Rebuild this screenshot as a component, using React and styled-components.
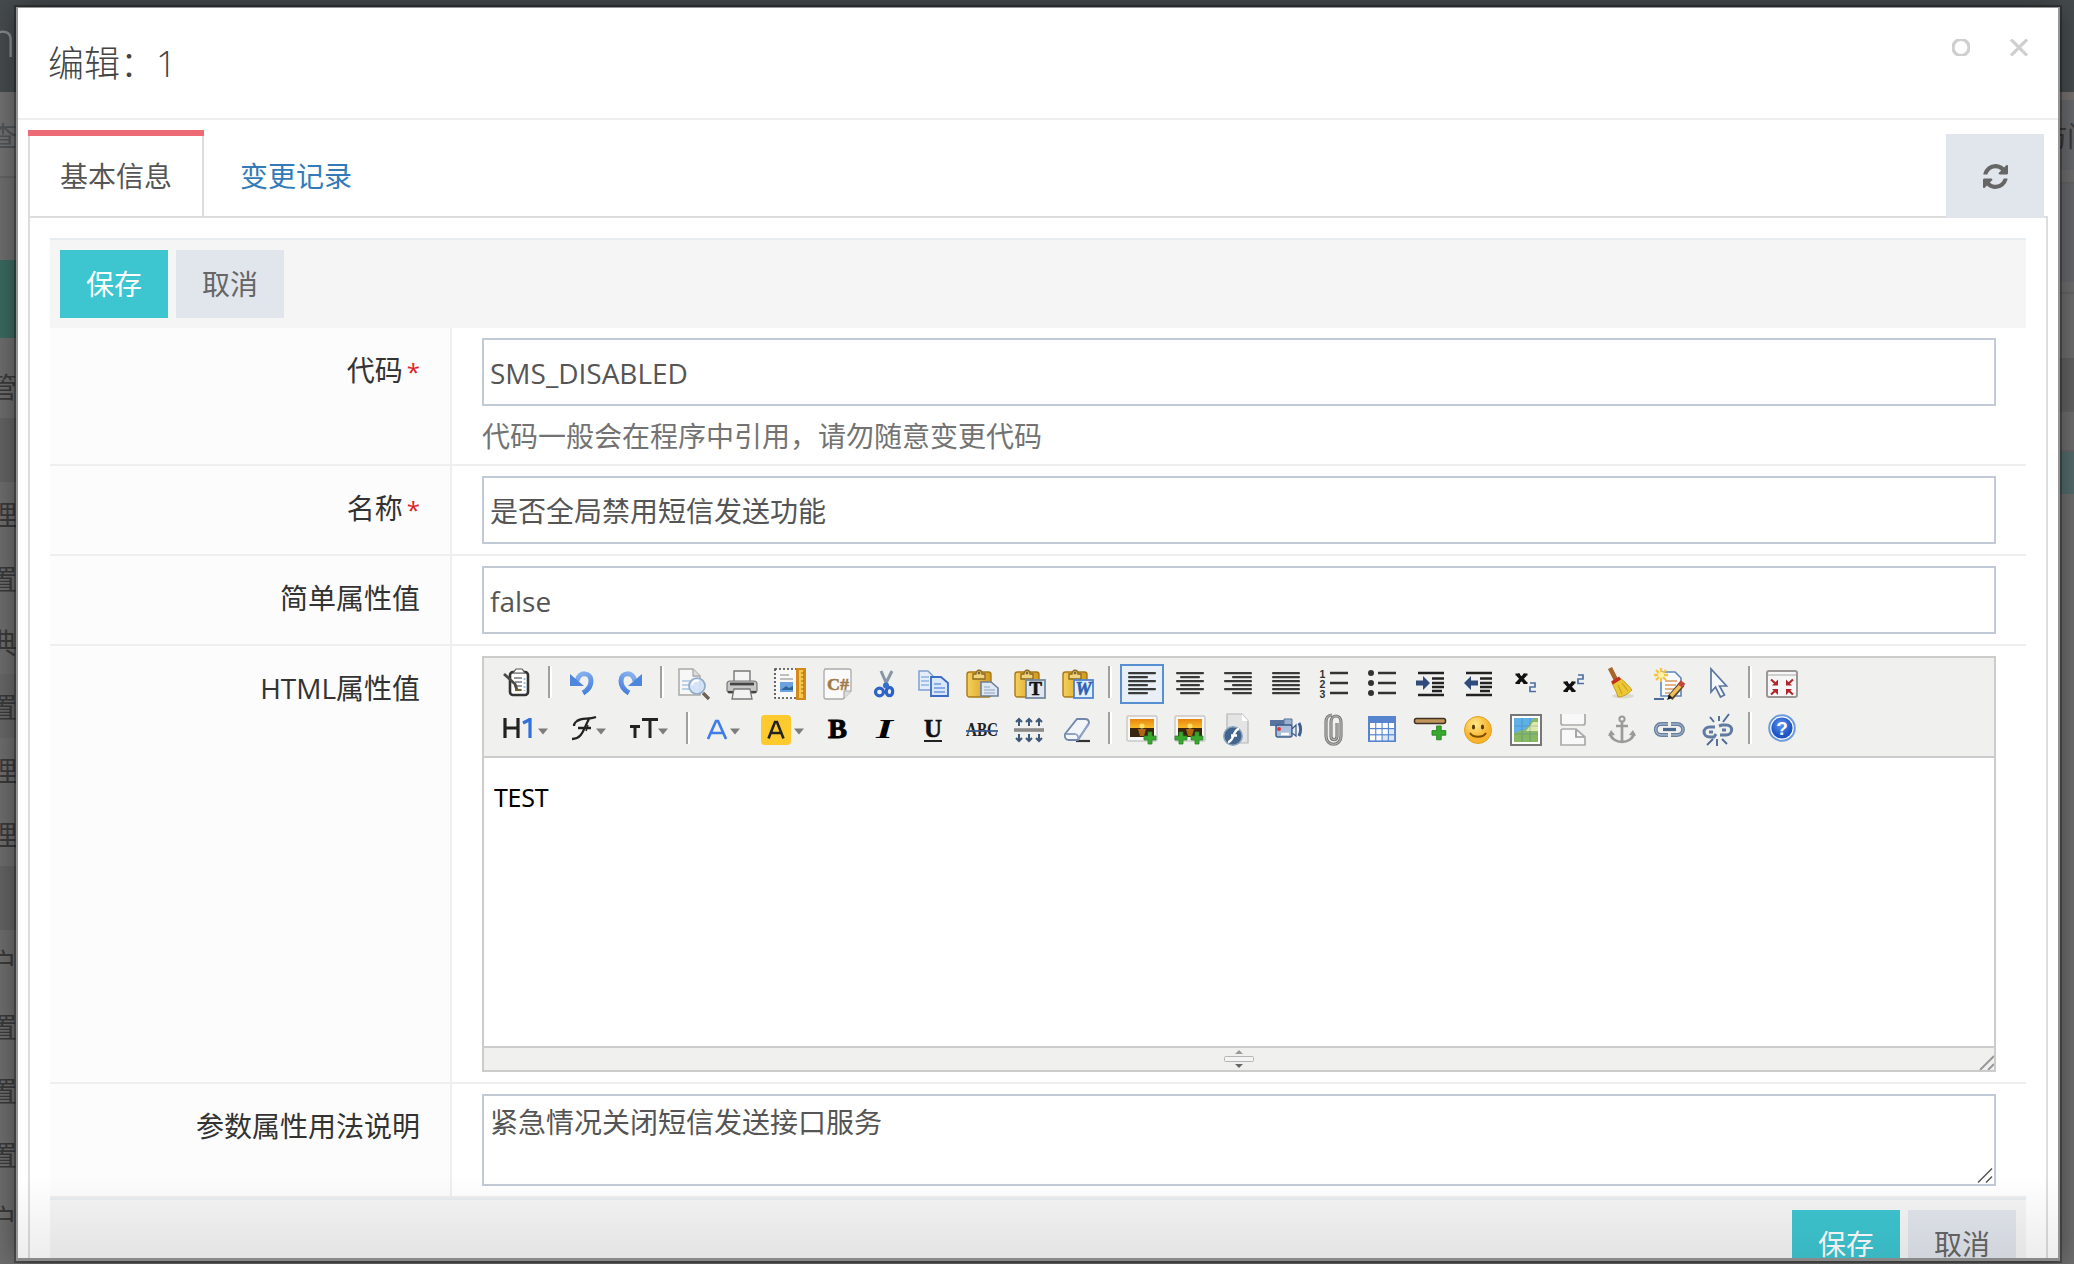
import React from 'react';
import styled, { createGlobalStyle, css } from 'styled-components';

const Global = createGlobalStyle`
  * { box-sizing: border-box; }
  body {
    margin: 0;
    overflow: hidden;
    font-family: "Open Sans", "Noto Sans CJK SC", sans-serif;
    font-size: 28px;
    color: #333;
  }
  button, input, textarea { font-family: inherit; font-size: inherit; margin: 0; }
`;

/* ---------- page behind the dialog ---------- */
const Page = styled.div`
  position: relative;
  width: 2074px;
  height: 1264px;
  overflow: hidden;
  background: #6d6d6d;
  display: flex;
  flex-direction: column;
`;
const TopBar = styled.div`
  height: 92px;
  flex: none;
  background: #464b4e;
  overflow: hidden;
`;
const Brand = styled.div`
  margin: 4px 0 0 -13px;
  font-size: 49px;
  font-weight: 300;
  line-height: 68px;
  color: #85898c;
`;
const Behind = styled.div`
  flex: 1;
  display: flex;
  justify-content: space-between;
`;
const Side = styled.div`
  width: 30px;
  overflow: hidden;
  display: flex;
  flex-direction: column;
`;
const SideItem = styled.div`
  flex: none;
  height: ${(p) => p.$h}px;
  line-height: ${(p) => p.$h + 2}px;
  background: ${(p) => p.$bg || 'transparent'};
  border-bottom: ${(p) => (p.$line ? '2px solid #646464' : '0')};
  color: ${(p) => p.$fg || '#3a3a3a'};
  text-indent: ${(p) => p.$indent ?? -11}px;
  white-space: nowrap;
`;

/* ---------- dialog ---------- */
const Dialog = styled.div`
  position: absolute;
  left: 16px;
  top: 7px;
  width: 2044px;
  height: 1254px;
  border: 2px solid #949494;
  border-top-width: 1px;
  border-bottom: 3px solid #8a8a8a;
  background: #fff;
  box-shadow: 0 0 0 2px rgba(0, 0, 0, 0.28), 0 0 26px rgba(0, 0, 0, 0.42);
  overflow: hidden;
`;
const Header = styled.div`
  height: 112px;
  border-bottom: 2px solid #eee;
  display: flex;
  justify-content: space-between;
  padding: 0 30px 0 30px;
`;
const Title = styled.div`
  font-size: 36px;
  font-weight: 300;
  line-height: 111px;
  white-space: pre;
  color: #444;
`;
const HeaderTools = styled.div`
  display: flex;
  gap: 40px;
  padding-top: 31px;
`;
const ToolIcon = styled.svg`
  display: block;
  width: 18px;
  height: 17px;
  fill: none;
  stroke: #cfcfcf;
  stroke-width: 3.2;
`;
const TabBar = styled.div`
  height: 98px;
  padding: 10px 14px 0 10px;
  display: flex;
`;
const Tab = styled.div`
  width: ${(p) => (p.$active ? 176 : 184)}px;
  height: 86px;
  border: solid ${(p) => (p.$active ? '#ddd' : 'transparent')};
  border-width: 0 2px;
  position: relative;
  display: flex;
  justify-content: center;
  line-height: 92px;
  color: ${(p) => (p.$active ? '#555' : '#337ab7')};
  ${(p) =>
    p.$active &&
    css`
      &::before {
        content: '';
        position: absolute;
        left: -2px;
        right: -2px;
        top: 0;
        height: 6px;
        background: #ed6b75;
      }
    `}
`;
const Refresh = styled.button`
  margin: 4px 0 0 auto;
  width: 98px;
  height: 84px;
  border: 0;
  padding: 0;
  background: #e1e5ec;
  color: #666;
  display: flex;
  align-items: center;
  justify-content: center;
  z-index: 1;
`;
const Pane = styled.div`
  margin: -2px 10px 0;
  height: 1100px;
  border: 2px solid #ddd;
  padding: 20px;
`;
const Actions = styled.div`
  height: 90px;
  border-top: 2px solid #e7ecf1;
  background: #f5f5f5;
  padding: 10px;
  display: flex;
  gap: 8px;
  justify-content: ${(p) => (p.$end ? 'flex-end' : 'flex-start')};
`;
const Button = styled.button`
  width: 108px;
  height: 68px;
  border: 0;
  padding: 0;
  line-height: 68px;
  background: ${(p) => (p.$primary ? '#3dc5d0' : '#e1e5ec')};
  color: ${(p) => (p.$primary ? '#fff' : '#666')};
`;
const Row = styled.div`
  height: ${(p) => p.$h}px;
  border-bottom: 2px solid #efefef;
  display: flex;
`;
const Label = styled.label`
  width: 400px;
  flex: none;
  background: #fcfcfc;
  padding: 19px 30px 0 0;
  text-align: right;
  line-height: 46px;
`;
const Star = styled.span`
  margin-left: 4px;
  font-size: 24px;
  line-height: 1;
  color: #e02222;
`;
const Field = styled.div`
  flex: 1;
  border-left: 2px solid #efefef;
  padding: 10px 30px;
`;
const Input = styled.input`
  display: block;
  width: 1514px;
  height: 68px;
  border: 2px solid #c2cad8;
  padding: ${(p) => (p.$cjk ? '0 6px 1px' : '2px 6px 0')};
  color: #555;
  outline: 0;
`;
const Help = styled.div`
  height: 46px;
  line-height: 46px;
  margin-top: 7px;
  color: #737373;
`;
const TextArea = styled.textarea`
  display: block;
  width: 1514px;
  height: 92px;
  border: 2px solid #c2cad8;
  padding: 6px 6px;
  line-height: 40px;
  color: #555;
  resize: none;
  outline: 0;
`;
const AreaWrap = styled.div`
  position: relative;
  width: 1514px;
`;
const AreaGrip = styled.svg`
  position: absolute;
  right: 3px;
  bottom: 3px;
  width: 16px;
  height: 16px;
`;
const Bottom = styled.div`
  position: absolute;
  left: 0;
  right: 0;
  bottom: 0;
  height: 84px;
  background: linear-gradient(rgba(0, 0, 0, 0), rgba(0, 0, 0, 0.07));
  pointer-events: none;
`;

/* ---------- rich text editor ---------- */
const Editor = styled.div`
  width: 1514px;
  height: 416px;
  border: 2px solid #ccc;
  display: flex;
  flex-direction: column;
`;
const Toolbar = styled.div`
  height: 100px;
  border-bottom: 2px solid #ccc;
  background: #f0f0ee;
  padding: 6px 0 0 12px;
  display: flex;
  flex-direction: column;
  gap: 2px;
`;
const ToolRow = styled.div`
  height: 44px;
  display: flex;
  align-items: flex-start;
`;
const Tool = styled.div`
  width: ${(p) => p.$w - 4}px;
  height: 40px;
  margin-right: 4px;
  padding: 2px 4px;
  border: 2px solid ${(p) => (p.$on ? '#5690d2' : 'transparent')};
  background: ${(p) => (p.$on ? '#e9eff6' : 'transparent')};
  display: flex;
`;
const Glyph = styled.svg`
  display: block;
  flex: none;
  height: 32px;
  overflow: visible;
`;
const Divider = styled.div`
  width: 4px;
  height: 32px;
  margin: 2px 8px 0 4px;
  border-left: 2px solid #a0a0a0;
  border-right: 2px solid #fff;
`;
const Canvas = styled.div`
  flex: 1;
  background: #fff;
  padding: 21px 10px;
  font-family: "Noto Sans", sans-serif;
  font-size: 25px;
  letter-spacing: -0.3px;
  line-height: 36px;
  color: #000;
`;
const Status = styled.div`
  height: 24px;
  border-top: 2px solid #ccc;
  background: #f0f0ee;
  display: grid;
  grid-template-columns: 16px 1fr 16px;
  justify-items: center;
`;
const Gradients = styled.svg`
  position: absolute;
  width: 0;
  height: 0;
`;

const bars = (ws, anchor) =>
  ws.map((w, i) => {
    const x = anchor === 'c' ? 16 - w / 2 : anchor === 'r' ? 30 - w : 2;
    return <rect key={i} x={x} y={4 + i * 4} width={w} height="2.3" rx="1" fill="#3a3a3a" />;
  });
const Clip = ({ children }) => (
  <>
    <rect x="1" y="4" width="24" height="25" rx="2.5" fill="url(#gold)" stroke="#a87916" strokeWidth="1.4" />
    <path d="M7 11V6h3c0-5 6-5 6 0h3v5z" fill="#f1d37c" stroke="#8a6a20" strokeWidth="1.3" />
    <circle cx="13" cy="5" r="1.4" fill="#7c6330" />
    {children}
  </>
);
const Plus = ({ x, y }) => (
  <path transform={`translate(${x} ${y})`} d="M4 0h4v4h4v4h-4v4h-4v-4h-4v-4h4z" fill="#39a82f" stroke="#2c8425" strokeWidth=".8" />
);
const Caret = ({ x }) => <path d={`M${x} 14.500h10l-5 6z`} fill="#7d7d7d" />;
const Photo = () => (
  <>
    <rect x="1" y="2" width="30" height="25" rx="1.5" fill="#f8f8f8" stroke="#c9c9c9" strokeWidth="1.5" />
    <rect x="4" y="5" width="24" height="10" fill="url(#sunset)" />
    <rect x="4" y="14" width="24" height="9" fill="#38240f" />
    <path d="M12 15h8l-2 7h-4z" fill="#b06712" />
    <circle cx="16" cy="12" r="2.5" fill="#ffe46b" />
  </>
);

const art = {
  source: (
    <>
      <rect x="8" y="4" width="18" height="23" rx="3" fill="#fff" stroke="#333" strokeWidth="2.6" />
      <path d="M11 5l3-4h6l3 4z" fill="#fff" stroke="#555" strokeWidth="1.2" />
      <path d="M12 10h8M13 14h7M12 18h8M13 22h7" stroke="#777" strokeWidth="1.4" />
      <path d="M22.500 10v13" stroke="#9bc7e6" strokeWidth="2" strokeDasharray="2 2" />
      <path d="M2 6l11 10 2 6" fill="none" stroke="#4b4a43" strokeWidth="2.8" />
      <path d="M13 22h6" stroke="#6f6639" strokeWidth="2.2" />
    </>
  ),
  undo: (
    <>
      <path d="M11 13C13 3 25 4 25 13c0 6-3 9-8 12" fill="none" stroke="url(#blue)" strokeWidth="5" />
      <path d="M4 6v12h14z" fill="#4f86dd" />
    </>
  ),
  redo: (
    <g transform="translate(32 0) scale(-1 1)">
      <path d="M11 13C13 3 25 4 25 13c0 6-3 9-8 12" fill="none" stroke="url(#blue)" strokeWidth="5" />
      <path d="M4 6v12h14z" fill="#4f86dd" />
    </g>
  ),
  preview: (
    <>
      <path d="M1 1h14l7 7v19H1z" fill="#f7f7f7" stroke="#a9a9a9" strokeWidth="1.5" />
      <path d="M15 1v7h7" fill="#ddd" stroke="#a9a9a9" strokeWidth="1.3" />
      <path d="M4 13h9M4 17h8M4 21h9" stroke="#a9c5e0" strokeWidth="1.6" />
      <path d="M25 25l6 6" stroke="#6c6258" strokeWidth="3.4" />
      <circle cx="19" cy="18" r="8" fill="#cfe2f7" fillOpacity=".92" stroke="#8fa9c8" strokeWidth="1.7" />
      <path d="M14 17c1-4 4-5 7-4" fill="none" stroke="#fff" strokeWidth="2" />
    </>
  ),
  print: (
    <>
      <path d="M8 14V3h16v11z" fill="#f4f4f4" stroke="#777" strokeWidth="1.4" />
      <rect x="1" y="13" width="30" height="12" rx="3" fill="#c7c7c7" stroke="#777" strokeWidth="1.2" />
      <path d="M4 16h24" stroke="#444" strokeWidth="2.8" />
      <path d="M2 24h28" stroke="#444" strokeWidth="2.2" />
      <path d="M8 21h16l2 10H6z" fill="#f2f2f2" stroke="#777" strokeWidth="1.3" />
    </>
  ),
  template: (
    <>
      <rect x="1" y="1" width="24" height="29" fill="#f8f8f8" stroke="#444" strokeWidth="1.6" strokeDasharray="2 2" />
      <path d="M6 7h9M6 11h13M15 15h4" stroke="#aaa" strokeWidth="1.4" />
      <rect x="6" y="14" width="13" height="10" fill="#6ba3e0" />
      <path d="M7 22l5-4 3 2 4-2v4z" fill="#2f6699" />
      <rect x="22" y="0" width="10" height="32" fill="#d4891b" />
      <rect x="25" y="2" width="4" height="28" fill="#f5c84c" />
      <path d="M27 5h3M27 9h3M27 13h3M27 17h3M27 21h3M27 25h3" stroke="#a8650c" strokeWidth="1" />
    </>
  ),
  code: (
    <>
      <path d="M3 1h24q2 0 2 2v20l-8 8H4q-2 0-2-2V3z" fill="#fafafa" stroke="#aaa" strokeWidth="1.3" />
      <path d="M29 23h-7v8" fill="#ddd" stroke="#aaa" strokeWidth="1.2" />
      <text x="5" y="21.5" fontFamily="Liberation Serif" fontWeight="bold" fontSize="16" textLength="22" lengthAdjust="spacingAndGlyphs" fill="#a07a48" stroke="#a07a48" strokeWidth=".5">C#</text>
    </>
  ),
  cut: (
    <>
      <path d="M11 3l7 16M22 3l-8 16" stroke="#8796a6" strokeWidth="3" />
      <ellipse cx="9.500" cy="24" rx="4" ry="3.8" fill="none" stroke="#2d62c8" strokeWidth="3.2" />
      <ellipse cx="19.5" cy="23.5" rx="3.2" ry="4.2" fill="none" stroke="#2d62c8" strokeWidth="3.2" />
      <circle cx="16" cy="17.5" r="3" fill="#3570cc" />
    </>
  ),
  copy: (
    <>
      <path d="M1 3h9l5 5v14H1z" fill="#e4eefb" stroke="#7fa0cf" strokeWidth="1.5" />
      <path d="M3 9h8M3 13h8M3 17h8" stroke="#8fb2e2" strokeWidth="1.4" />
      <path d="M13 9h10l7 6v13H13z" fill="#d8e7fb" stroke="#3c6cc4" strokeWidth="1.8" />
      <path d="M16 16h7M16 20h11M16 24h11" stroke="#6f98dc" strokeWidth="1.5" />
    </>
  ),
  paste: (
    <Clip>
      <path d="M15 14h10l7 6v8H15z" fill="#dfe7f2" stroke="#6b7f99" strokeWidth="1.6" />
      <path d="M18 19h6M18 22h11M18 25h11" stroke="#8ea3c0" strokeWidth="1.2" />
    </Clip>
  ),
  plain: (
    <Clip>
      <rect x="12" y="12" width="19" height="18" fill="#dfe6ee" stroke="#75899f" strokeWidth="1.8" />
      <text x="21.5" y="27" textAnchor="middle" fontFamily="Liberation Serif" fontWeight="bold" fontSize="19" fill="#111" stroke="#111" strokeWidth=".6">T</text>
    </Clip>
  ),
  word: (
    <Clip>
      <rect x="12" y="12" width="19" height="18" fill="#e6f0fc" stroke="#4e86cf" strokeWidth="1.8" />
      <text x="21.5" y="27" textAnchor="middle" fontFamily="Liberation Serif" fontWeight="bold" fontStyle="italic" fontSize="18" fill="#2b62b5" stroke="#2b62b5" strokeWidth=".6">W</text>
    </Clip>
  ),
  left: bars([28, 20, 28, 20, 28, 20]),
  center: bars([28, 20, 28, 20, 28, 20], 'c'),
  right: bars([28, 20, 28, 20, 28, 20], 'r'),
  full: bars([28, 28, 28, 28, 28, 28]),
  ol: (
    <>
      <path d="M12 5h18M12 15h18M12 25h18" stroke="#333" strokeWidth="2.4" />
      {[1, 2, 3].map((n) => (
        <text key={n} x="1.5" y={n * 10 - 0.5} fontFamily="Liberation Sans" fontWeight="bold" fontSize="10.5" fill="#333">{n}</text>
      ))}
    </>
  ),
  ul: (
    <>
      <path d="M12 5h18M12 15h18M12 25h18" stroke="#333" strokeWidth="2.4" />
      {[5, 15, 25].map((y) => <circle key={y} cx="5" cy={y} r="3" fill="#333" />)}
    </>
  ),
  indent: (
    <>
      <path d="M4 5h26M4 27h26" stroke="#222" strokeWidth="2.4" />
      <path d="M18 10.5h12M18 15h12M18 19h12M18 23h10" stroke="#222" strokeWidth="2.6" />
      <path d="M2 12.500h7V8l7 7-7 7v-4.500H2z" fill="#2f4a7b" />
    </>
  ),
  outdent: (
    <>
      <path d="M4 5h26M4 27h26" stroke="#222" strokeWidth="2.4" />
      <path d="M18 10.5h12M18 15h12M18 19h12M18 23h10" stroke="#222" strokeWidth="2.6" />
      <path d="M16 12.500H9V8l-7 7 7 7v-4.500h7z" fill="#2f4a7b" />
    </>
  ),
  sub: (
    <>
      <path d="M7.500 6.500l8 8.500M15.500 6.500l-8 8.500" stroke="#111" strokeWidth="3.4" />
      <path d="M5.500 6.500h4.500M13.500 6.500h4M5.500 15h4.500M13.500 15h4" stroke="#111" strokeWidth="2" />
      <path d="M20 15h5v4h-5v4.500h6" fill="none" stroke="#4f6fa3" strokeWidth="1.7" />
    </>
  ),
  sup: (
    <>
      <path d="M7.500 14.500l8 8.500M15.500 14.500l-8 8.500" stroke="#111" strokeWidth="3.4" />
      <path d="M5.500 14.500h4.500M13.500 14.500h4M5.500 23h4.500M13.500 23h4" stroke="#111" strokeWidth="2" />
      <path d="M20 7h5v4h-5v4.500h6" fill="none" stroke="#4f6fa3" strokeWidth="1.7" />
    </>
  ),
  clear: (
    <>
      <ellipse cx="17" cy="28" rx="11" ry="2.5" fill="#ddd9ce" />
      <path d="M4 0l6 12" stroke="#a5672b" strokeWidth="4.6" />
      <path d="M6 15l8-5c5 4 8 7 12 12-4 4-9 7-14 7-1-5-4-9-6-14z" fill="#ecc934" stroke="#c79c20" strokeWidth="1" />
      <path d="M6 15l8-5" stroke="#c22d20" strokeWidth="3.6" />
      <path d="M12 17l4 9M16 15l6 8" stroke="#c9a31f" strokeWidth="1.2" />
    </>
  ),
  format: (
    <>
      <path d="M7 4h14l6 6v18H7z" fill="#f8fbff" stroke="#5f86b8" strokeWidth="1.6" />
      <path d="M11 13h12M11 17h11M11 21h9M11 25h5" stroke="#dd9a63" strokeWidth="1.5" />
      <path d="M7 0v14M0 7h14M2 2l10 10M12 2L2 12" stroke="#f4c544" strokeWidth="2.3" />
      <circle cx="7" cy="7" r="3" fill="#fff3a8" />
      <path d="M0 31h10" stroke="#3e5c8c" strokeWidth="1.8" />
      <path d="M16 30L28 16" stroke="#5a4630" strokeWidth="6.5" />
      <path d="M17 28L27 17" stroke="#efc057" strokeWidth="3.6" />
      <path d="M26 18l3-4" stroke="#c0473c" strokeWidth="6" />
      <path d="M13 32l2-5 3 3z" fill="#111" />
    </>
  ),
  select: <path d="M9 1v23l4.500-5 5 10 4-2-5-9h7z" fill="#f5f8fc" stroke="#5b779f" strokeWidth="1.7" />,
  screen: (
    <>
      <rect x="1" y="3" width="30" height="26" rx="2" fill="#f6f6f6" stroke="#9c9696" strokeWidth="2" />
      <path d="M2 7h28" stroke="#cfcfcf" strokeWidth="2" />
      <path d="M12 17.500v-6l-6 6zM20 17.500v-6l6 6zM12 21v6l-6-6zM20 21v6l6-6z" fill="#b5262c" />
      <path d="M5 11.500l5 4.500M27 11.500l-5 4.500M5 26.500l5-4.500M27 26.500l-5-4.500" stroke="#b5262c" strokeWidth="2.2" />
    </>
  ),
  heading: (
    <>
      <path d="M3 4v20M16 4v20M3 14h13" fill="none" stroke="#222" strokeWidth="3.2" />
      <path d="M21 9l6-3M28 4v20" fill="none" stroke="#2f6fe0" strokeWidth="3.2" />
      <Caret x={36} />
    </>
  ),
  font: (
    <>
      <path d="M9 7C14 3 20 6 28 3M21 5c-5 8-6 20-17 20M10 14h13M12 6c-4 1-6 3-6 6" fill="none" stroke="#222" strokeWidth="2.3" />
      <path d="M20 11l-2 6" stroke="#222" strokeWidth="1.5" />
      <Caret x={28} />
    </>
  ),
  size: (
    <>
      <path d="M2 12.500h10M7 12v12M14 5.500h16M22 5v19" stroke="#222" strokeWidth="3" />
      <Caret x={30} />
    </>
  ),
  color: (
    <>
      <path d="M4 25L12 7h2l8 18M7 19h12" fill="none" stroke="#3f7de8" strokeWidth="2.7" />
      <Caret x={26} />
    </>
  ),
  hilite: (
    <>
      <rect x="3" y="1" width="30" height="30" rx="4" fill="#fdca2e" />
      <path d="M10.500 24.500L17 8h2l6.500 16.500M13 19h10" fill="none" stroke="#222" strokeWidth="2.6" />
      <Caret x={36} />
    </>
  ),
  bold: <text x="6" y="24" fontFamily="Liberation Serif" fontWeight="bold" fontSize="27" textLength="19" lengthAdjust="spacingAndGlyphs" fill="#000" stroke="#000" strokeWidth=".9">B</text>,
  italic: <text x="6" y="24" fontFamily="Liberation Serif" fontWeight="bold" fontStyle="italic" fontSize="27" textLength="17" lengthAdjust="spacingAndGlyphs" fill="#000">I</text>,
  underline: (
    <>
      <text x="6" y="23" fontFamily="Liberation Serif" fontWeight="bold" fontSize="25" textLength="18" lengthAdjust="spacingAndGlyphs" fill="#111" stroke="#111" strokeWidth=".6">U</text>
      <path d="M6 27h18" stroke="#222" strokeWidth="2" />
    </>
  ),
  strike: (
    <>
      <text x="0" y="22" fontFamily="Liberation Serif" fontWeight="bold" fontSize="19" textLength="32" lengthAdjust="spacingAndGlyphs" fill="#222">ABC</text>
      <path d="M0 17h32" stroke="#3c5c8f" strokeWidth="1.8" />
    </>
  ),
  lines: (
    <>
      <path d="M0 16h30" stroke="#8a8a8a" strokeWidth="3.6" />
      {[5, 15, 25].map((x) => (
        <path key={x} d={`M${x} 12V5M${x - 3} 8l3-3 3 3M${x} 20v7M${x - 3} 24l3 3 3-3`} fill="none" stroke="#3d5878" strokeWidth="2" />
      ))}
    </>
  ),
  eraser: (
    <>
      <path d="M14 27h14" stroke="#333" strokeWidth="2.2" />
      <path d="M3 20L15 5h8q4 0 4 4L16 26H6q-4-1-3-6z" fill="#f2f6fc" stroke="#7286ab" strokeWidth="1.8" />
      <path d="M4 20h9q4 1 3 5L27 10" fill="none" stroke="#8fa4c8" strokeWidth="1.8" />
    </>
  ),
  image: <><Photo /><Plus x={18} y={18} /></>,
  images: <><Photo /><Plus x={1} y={18} /><Plus x={17} y={18} /></>,
  flash: (
    <>
      <path d="M5 0h15l6 7v22H5z" fill="#e4e4e4" stroke="#b5b5b5" strokeWidth="1.2" />
      <path d="M20 0v7h6" fill="#fff" />
      <circle cx="11" cy="22" r="9.2" fill="#41658c" stroke="#8ba4bd" strokeWidth="1.5" />
      <path d="M17 15c-6 0-5 13-11 13M9 21.500h6" fill="none" stroke="#fff" strokeWidth="2.4" />
    </>
  ),
  media: (
    <>
      <path d="M0 6h14v6H0z" fill="#56749d" />
      <path d="M14 5h8v6h-8z" fill="#9bb1cc" stroke="#56749d" />
      <rect x="6" y="11" width="16" height="12" rx="2" fill="#a9bfdb" stroke="#3f5f8c" strokeWidth="1.5" />
      <path d="M22 15l4-4v11l-4-3z" fill="#dfe8f3" stroke="#3f5f8c" strokeWidth="1.2" />
      <path d="M29 9c2 4 2 9 0 13" fill="none" stroke="#3f5f8c" strokeWidth="3" />
      <circle cx="9" cy="15" r="2" fill="#d33" />
      <path d="M11 20h8" stroke="#fff" strokeWidth="2.5" />
    </>
  ),
  file: (
    <g fill="none">
      <path d="M19 9v13c0 5-6 5-6 0V8c0-8 10-8 10 0v14c0 11-15 11-15 0V8C8 4 10 1 14 1" stroke="#7c7c7c" strokeWidth="3.2" />
      <path d="M19 9v13c0 5-6 5-6 0V8c0-8 10-8 10 0v14c0 11-15 11-15 0V8C8 4 10 1 14 1" stroke="#bdbdbd" strokeWidth="1" />
    </g>
  ),
  table: (
    <>
      <rect x="2" y="2" width="28" height="26" fill="#5684cd" />
      {[0, 1, 2, 3].map((c) => [0, 1, 2].map((r) => (
        <rect key={`${c}${r}`} x={4 + c * 6.3} y={9 + r * 6.2} width="5.2" height="5" fill={c + r > 3 ? '#dbe7f8' : '#fff'} />
      )))}
    </>
  ),
  hr: (
    <>
      <rect x="0.5" y="4.5" width="31" height="5" rx="2" fill="#c0965b" stroke="#403225" strokeWidth="1.5" />
      <g transform="translate(18 12) scale(1.15)"><Plus x={0} y={0} /></g>
    </>
  ),
  smile: (
    <>
      <circle cx="16" cy="16" r="13.5" fill="url(#face)" stroke="#e0a021" strokeWidth="1" />
      <ellipse cx="11.5" cy="13" rx="1.6" ry="2.6" fill="#5a3a08" />
      <ellipse cx="20.5" cy="13" rx="1.6" ry="2.6" fill="#5a3a08" />
      <path d="M8 19c3 5 13 5 16 0" fill="none" stroke="#7a4c08" strokeWidth="2" />
    </>
  ),
  map: (
    <>
      <rect x="1" y="1" width="30" height="30" fill="#fff" stroke="#777" strokeWidth="2" />
      <rect x="4" y="4" width="24" height="24" fill="#87b863" />
      <path d="M4 4h20l-8 11-12 4z" fill="#5fb0e6" />
      <path d="M16 17l7-9h5v9z" fill="#dfe8a8" />
      <path d="M12 4v24M20 4v24M4 12h24M4 20h24" stroke="#3d6e9e" strokeOpacity=".3" strokeWidth="1.2" />
    </>
  ),
  pagebreak: (
    <>
      <path d="M3 0v9q0 2 2 2h20q2 0 2-2V0" fill="#f8f8f8" stroke="#aaa" strokeWidth="1.7" />
      <path d="M3 31V17q0-2 2-2h13l9 8v8z" fill="#f8f8f8" stroke="#aaa" strokeWidth="1.7" />
      <path d="M18 16v7h8" fill="none" stroke="#999" strokeWidth="1.7" />
    </>
  ),
  anchor: (
    <>
      <circle cx="16" cy="5" r="2.6" fill="none" stroke="#9a9a9a" strokeWidth="2" />
      <path d="M16 8v19M10 12h12M4 19c2 12 22 12 24 0" fill="none" stroke="#9a9a9a" strokeWidth="2.7" />
      <path d="M2 22l3-6 4 5zM30 22l-3-6-4 5z" fill="#9a9a9a" />
    </>
  ),
  link: (
    <>
      <path d="M14 10H7c-7 0-7 11 0 11h7M17 10h6c8 0 8 11 0 11h-6" fill="none" stroke="#69809f" strokeWidth="3.8" />
      <path d="M14 10H7c-7 0-7 11 0 11h7M17 10h6c8 0 8 11 0 11h-6" fill="none" stroke="#b7c8dd" strokeWidth="1" />
      <path d="M9 15.500h13" stroke="#4c6a8e" strokeWidth="3.2" />
    </>
  ),
  unlink: (
    <>
      <g fill="none" stroke="#5f7ba2" strokeWidth="3">
        <path d="M13 13H8c-8 0-8 10 0 10h4l2-3M7 18h4" />
        <path d="M17 12l3-1h4c8 0 7 10 0 10h-6M20 16h4" />
      </g>
      <path d="M17 7V2M21 8l6-8M12 8L8 3M15 25v7M11 25l-6 6M20 25l5 5" stroke="#4f6c95" strokeWidth="1.9" />
    </>
  ),
  help: (
    <>
      <circle cx="16" cy="14" r="12.8" fill="#fff" stroke="#6d9bdd" strokeWidth="2" />
      <circle cx="16" cy="14" r="10.6" fill="url(#orb)" />
      <text x="16" y="21" textAnchor="middle" fontFamily="Liberation Sans" fontWeight="bold" fontSize="19" fill="#fff">?</text>
    </>
  ),
};

const rowOne = ['source', '|', 'undo', 'redo', '|', 'preview', 'print', 'template', 'code', 'cut', 'copy', 'paste', 'plain', 'word', '|', 'left', 'center', 'right', 'full', 'ol', 'ul', 'indent', 'outdent', 'sub', 'sup', 'clear', 'format', 'select', '|', 'screen'];
const rowTwo = ['heading', 'font', 'size', '|', 'color', 'hilite', 'bold', 'italic', 'underline', 'strike', 'lines', 'eraser', '|', 'image', 'images', 'flash', 'media', 'file', 'table', 'hr', 'smile', 'map', 'pagebreak', 'anchor', 'link', 'unlink', '|', 'help'];
const wide = { heading: 66, font: 60, size: 60, color: 54, hilite: 64 };

const Tools = ({ names }) => (
  <ToolRow>
    {names.map((n, i) => {
      if (n === '|') return <Divider key={i} />;
      const w = wide[n] || 48;
      return (
        <Tool key={i} $w={w} $on={n === 'left'}>
          <Glyph width={w - 16} viewBox={`0 0 ${w - 16} 32`}>{art[n]}</Glyph>
        </Tool>
      );
    })}
  </ToolRow>
);

const Defs = () => (
  <Gradients>
    <defs>
      <linearGradient id="gold"><stop offset="0" stopColor="#f6d05a" /><stop offset="1" stopColor="#cf9a20" /></linearGradient>
      <linearGradient id="blue" gradientUnits="userSpaceOnUse" x1="10" y1="4" x2="22" y2="28"><stop offset="0" stopColor="#8fb8f4" /><stop offset="1" stopColor="#3f78d8" /></linearGradient>
      <linearGradient id="sunset" x2="0" y2="1"><stop offset="0" stopColor="#e8860f" /><stop offset="1" stopColor="#fbc02f" /></linearGradient>
      <radialGradient id="face" cx=".4" cy=".3"><stop offset="0" stopColor="#ffe98a" /><stop offset="1" stopColor="#f8b42c" /></radialGradient>
      <radialGradient id="orb" cx=".45" cy=".35"><stop offset="0" stopColor="#5b95f0" /><stop offset="1" stopColor="#1f56c4" /></radialGradient>
    </defs>
  </Gradients>
);

const menu = [
  { h: 86, t: '查', fg: '#505456', line: true, bg: '#727171' },
  { h: 82, bg: '#6e6e6e' },
  { h: 78, bg: '#3a6960' },
  { h: 16 },
  { h: 64, t: '管' },
  { h: 64, bg: '#636363' },
  { h: 64, t: '理' },
  { h: 64, t: '置' },
  { h: 64, t: '典' },
  { h: 64, t: '置', bg: '#676767' },
  { h: 64, t: '理' },
  { h: 64, t: '理' },
  { h: 64, bg: '#636363' },
  { h: 64, t: '户' },
  { h: 64, t: '置' },
  { h: 64, t: '置' },
  { h: 64, t: '置' },
  { h: 64, t: '户' },
];
const behindRight = [
  { h: 8, bg: '#76716f' },
  { h: 70, t: '访问', bg: '#67686b', indent: -5 },
  { h: 14, line: true },
  { h: 98, bg: '#65676b' },
  { h: 12, line: true },
  { h: 64 },
  { h: 54, bg: '#616161', line: true },
  { h: 40, line: true },
  { h: 42, bg: '#536a6a' },
];

export default function App() {
  return (
    <Page>
      <Global />
      <Defs />
      <TopBar><Brand>n</Brand></TopBar>
      <Behind>
        <Side>
          {menu.map((m, i) => <SideItem key={i} $h={m.h} $bg={m.bg} $fg={m.fg} $line={m.line}>{m.t}</SideItem>)}
        </Side>
        <Side>
          {behindRight.map((m, i) => <SideItem key={i} $h={m.h} $bg={m.bg} $line={m.line} $indent={m.indent}>{m.t}</SideItem>)}
        </Side>
      </Behind>

      <Dialog>
        <Header>
          <Title>编辑：1</Title>
          <HeaderTools>
            <ToolIcon viewBox="0 0 18 17"><circle cx="9" cy="8.5" r="8" /></ToolIcon>
            <ToolIcon viewBox="0 0 18 17"><path d="M1 .5l16 16M17 .5L1 16.500" /></ToolIcon>
          </HeaderTools>
        </Header>
        <TabBar>
          <Tab $active>基本信息</Tab>
          <Tab>变更记录</Tab>
          <Refresh>
            <svg width="25" height="25" viewBox="0 0 1536 1536" fill="currentColor">
              <path d="M1511 928q0 5-1 7-64 268-268 434.500T764 1536q-146 0-282.500-55T238 1324l-129 129q-19 19-45 19t-45-19-19-45V960q0-26 19-45t45-19h448q26 0 45 19t19 45-19 45l-137 137q71 66 161 102t187 36q134 0 250-65t186-179q11-17 53-117 8-23 30-23h192q13 0 22.500 9.500t9.500 22.500zm25-800v448q0 26-19 45t-45 19h-448q-26 0-45-19t-19-45 19-45l138-138Q969 256 768 256q-134 0-250 65T332 500q-11 17-53 117-8 23-30 23H50q-13 0-22.500-9.500T18 608v-7q65-268 270-434.500T768 0q146 0 284 55.500T1297 212l130-129q19-19 45-19t45 19 19 45z" />
            </svg>
          </Refresh>
        </TabBar>
        <Pane>
          <Actions>
            <Button $primary>保存</Button>
            <Button>取消</Button>
          </Actions>
          <Row $h={138}>
            <Label>代码<Star>*</Star></Label>
            <Field>
              <Input defaultValue="SMS_DISABLED" />
              <Help>代码一般会在程序中引用，请勿随意变更代码</Help>
            </Field>
          </Row>
          <Row $h={90}>
            <Label>名称<Star>*</Star></Label>
            <Field><Input $cjk defaultValue="是否全局禁用短信发送功能" /></Field>
          </Row>
          <Row $h={90}>
            <Label>简单属性值</Label>
            <Field><Input defaultValue="false" /></Field>
          </Row>
          <Row $h={438}>
            <Label>HTML属性值</Label>
            <Field>
              <Editor>
                <Toolbar>
                  <Tools names={rowOne} />
                  <Tools names={rowTwo} />
                </Toolbar>
                <Canvas>TEST</Canvas>
                <Status>
                  <span />
                  <svg width="30" height="22" viewBox="0 0 30 22">
                    <path d="M11 6l4-4 4 4z" fill="#999" />
                    <path d="M11 16l4 4 4-4z" fill="#666" />
                    <rect x=".5" y="8.5" width="29" height="5" rx="1" fill="#f4f4f4" stroke="#b5b5b5" />
                  </svg>
                  <svg width="16" height="22" viewBox="0 0 16 22">
                    <path d="M2 22L16 8M10 22l6-6" stroke="#999" strokeWidth="2" />
                  </svg>
                </Status>
              </Editor>
            </Field>
          </Row>
          <Row $h={114}>
            <Label>参数属性用法说明</Label>
            <Field>
              <AreaWrap>
                <TextArea defaultValue="紧急情况关闭短信发送接口服务" />
                <AreaGrip viewBox="0 0 16 16"><path d="M1 15.500L15 1.500M9 15.500l6-6" stroke="#555" strokeWidth="1.5" /></AreaGrip>
              </AreaWrap>
            </Field>
          </Row>
          <Actions $end>
            <Button $primary>保存</Button>
            <Button>取消</Button>
          </Actions>
        </Pane>
        <Bottom />
      </Dialog>
    </Page>
  );
}
